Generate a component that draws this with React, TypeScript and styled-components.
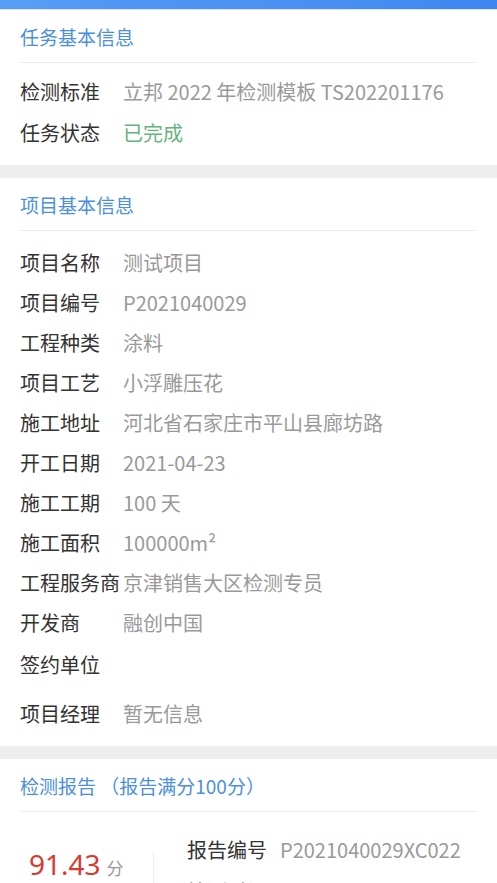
import React from 'react';
import styled, { createGlobalStyle } from 'styled-components';

const GlobalStyle = createGlobalStyle`
  html, body {
    margin: 0;
    padding: 0;
    background: #eeeeee;
  }
  body {
    font-family: 'Noto Sans CJK SC', 'Noto Sans', sans-serif;
    -webkit-font-smoothing: antialiased;
  }
`;

interface InfoItem {
  label: string;
  value?: string;
  tone?: 'normal' | 'success';
}

const taskInfo: InfoItem[] = [
  { label: '检测标准', value: '立邦 2022 年检测模板 TS202201176' },
  { label: '任务状态', value: '已完成', tone: 'success' },
];

const projectInfo: InfoItem[] = [
  { label: '项目名称', value: '测试项目' },
  { label: '项目编号', value: 'P2021040029' },
  { label: '工程种类', value: '涂料' },
  { label: '项目工艺', value: '小浮雕压花' },
  { label: '施工地址', value: '河北省石家庄市平山县廊坊路' },
  { label: '开工日期', value: '2021-04-23' },
  { label: '施工工期', value: '100 天' },
  { label: '施工面积', value: '100000m²' },
  { label: '工程服务商', value: '京津销售大区检测专员' },
  { label: '开发商', value: '融创中国' },
  { label: '签约单位' },
  { label: '项目经理', value: '暂无信息' },
];

const reportInfo: InfoItem[] = [
  { label: '报告编号', value: 'P2021040029XC022' },
  { label: '检测时间', value: '2022-03-11 15:12:00' },
];

const Page = styled.div`
  display: flex;
  flex-direction: column;
  gap: 13px;
  background: #eeeeee;
`;

const TopBar = styled.div`
  height: 10px;
  background: linear-gradient(90deg, #5a9ff6 0%, #4d94f3 30%, #4a90f2 65%, #3d86f1 100%);
  border-bottom: 1px solid #d6e6fb;
  box-sizing: border-box;
`;

const Header = styled.div`
  display: flex;
  flex-direction: column;
`;

const Section = styled.section`
  background: #ffffff;
  padding: 0 20px;
`;

const SectionTitle = styled.div`
  height: 52px;
  display: flex;
  align-items: center;
  font-size: 19px;
  color: #4a8fe0;
  border-bottom: 1px solid #eeeeee;
  white-space: nowrap;
`;

const RowList = styled.div<{ $top: number; $bottom: number }>`
  display: flex;
  flex-direction: column;
  padding: ${(p) => p.$top}px 0 ${(p) => p.$bottom}px;
`;

const Row = styled.div<{ $empty?: boolean; $height: number }>`
  display: flex;
  flex-shrink: 0;
  height: ${(p) => (p.$empty ? p.$height + 11 : p.$height)}px;
  align-items: ${(p) => (p.$empty ? 'flex-start' : 'center')};
  padding-top: ${(p) => (p.$empty ? '8px' : '0')};
  box-sizing: border-box;
  font-size: 20px;
  white-space: nowrap;
`;

const Label = styled.span<{ $width: number }>`
  flex: 0 0 ${(p) => p.$width}px;
  color: #333333;
`;

const Value = styled.span<{ $tone?: 'normal' | 'success' }>`
  color: ${(p) => (p.$tone === 'success' ? '#66b27e' : '#999999')};
`;

const Report = styled.div`
  display: flex;
  padding-top: 16px;
  padding-bottom: 20px;
`;

const ScoreBox = styled.div`
  flex: 0 0 124px;
  padding-left: 9px;
  padding-top: 19px;
  display: flex;
  align-items: baseline;
  gap: 6px;
`;

const ScoreNumber = styled.span`
  font-family: 'Noto Sans', sans-serif;
  font-size: 28px;
  line-height: 34px;
  color: #d83a2e;
`;

const ScoreUnit = styled.span`
  font-size: 17px;
  color: #999999;
`;

const VDivider = styled.div`
  width: 1px;
  margin-top: 24px;
  background: #eeeeee;
  align-self: stretch;
`;

const ReportRows = styled.div`
  display: flex;
  flex-direction: column;
  padding-left: 33px;
`;

const InfoRows: React.FC<{ items: InfoItem[]; labelWidth: number; rowHeight: number }> = ({
  items,
  labelWidth,
  rowHeight,
}) => (
  <>
    {items.map((item) => (
      <Row key={item.label} $empty={!item.value} $height={rowHeight}>
        <Label $width={labelWidth}>{item.label}</Label>
        {item.value && <Value $tone={item.tone}>{item.value}</Value>}
      </Row>
    ))}
  </>
);

const App: React.FC = () => {
  return (
    <>
      <GlobalStyle />
      <Page>
        <Header>
          <TopBar />
          <Section>
            <SectionTitle>任务基本信息</SectionTitle>
            <RowList $top={8} $bottom={12}>
              <InfoRows items={taskInfo} labelWidth={103} rowHeight={41} />
            </RowList>
          </Section>
        </Header>

        <Section>
          <SectionTitle>项目基本信息</SectionTitle>
          <RowList $top={11} $bottom={13}>
            <InfoRows items={projectInfo} labelWidth={103} rowHeight={40} />
          </RowList>
        </Section>

        <Section>
          <SectionTitle>检测报告 （报告满分100分）</SectionTitle>
          <Report>
            <ScoreBox>
              <ScoreNumber>91.43</ScoreNumber>
              <ScoreUnit>分</ScoreUnit>
            </ScoreBox>
            <VDivider />
            <ReportRows>
              <InfoRows items={reportInfo} labelWidth={93} rowHeight={42} />
            </ReportRows>
          </Report>
        </Section>
      </Page>
    </>
  );
};

export default App;
